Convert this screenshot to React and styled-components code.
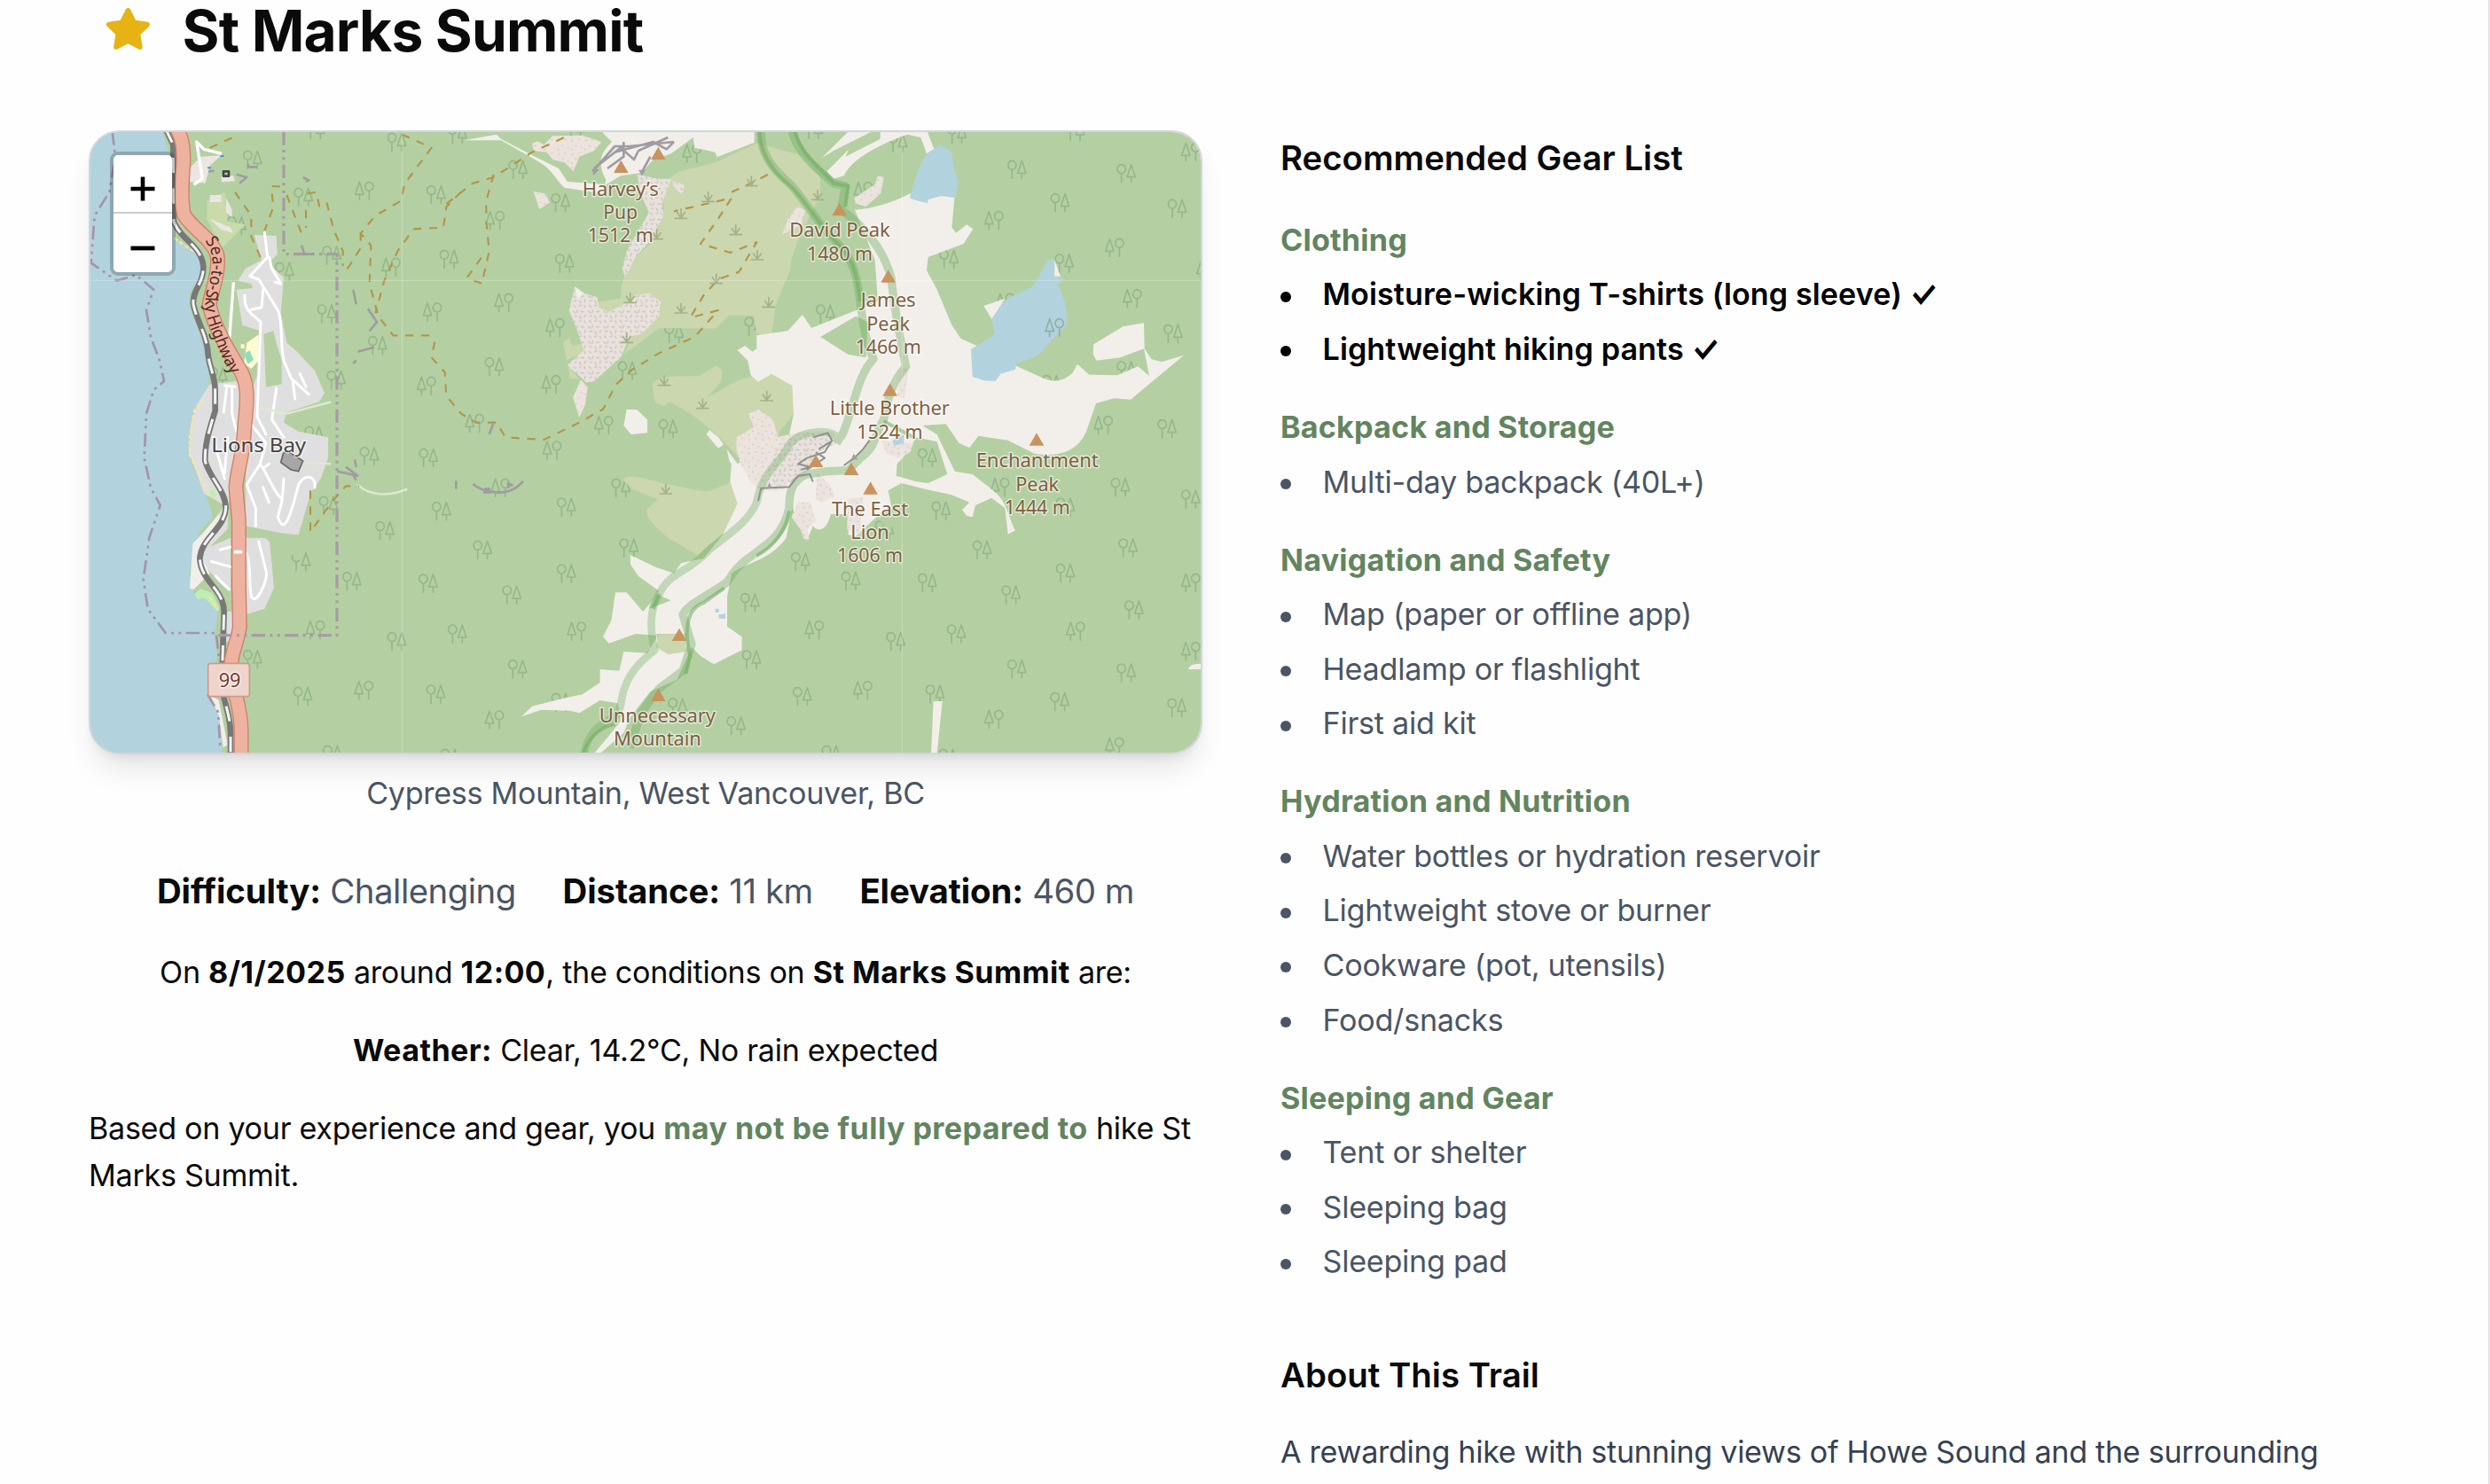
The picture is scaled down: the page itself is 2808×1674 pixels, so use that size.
import React from "react";
import styled, { createGlobalStyle } from "styled-components";
import { FaStar } from "react-icons/fa";

const Global = createGlobalStyle`
  html { font-size: 35.2px; }
  body { margin: 0; background: #fefefe; overflow: hidden; }
  *, *::before { box-sizing: border-box; }
  h1, h2, h3, p, ul { margin: 0; padding: 0; font-weight: inherit; font-size: inherit; }
`;

const Page = styled.main`
  height: 1674px;
  overflow: hidden;
  padding: 0 0 0 100px;
  border-right: 2px solid #e3e3e3;
  font-family: Inter, "Liberation Sans", sans-serif;
  font-size: 0.97rem;
  line-height: 1.5rem;
  letter-spacing: -0.3px;
  color: #0a0a0a;
  strong { letter-spacing: 0.42px; }
`;
const Header = styled.header`
  display: flex;
  align-items: center;
  gap: 0.5rem;
  height: 88px;
  margin: -11.4px 0 2rem;
`;
const StarButton = styled.button`
  display: flex;
  padding: 0.5rem;
  border: 0;
  background: none;
  color: #e6b313;
  font-size: 1.5rem;
`;
const Title = styled.h1`
  padding-top: 5px;
  font-size: 64px;
  line-height: 1;
  font-weight: 700;
  letter-spacing: -0.8px;
`;
const Columns = styled.div`
  display: grid;
  grid-template-columns: 1256px 1256px;
  column-gap: 88px;
`;
const Column = styled.section`
  display: flex;
  flex-direction: column;
  padding-top: ${(p) => (p.$text ? "1px" : "0")};
`;
const MapFrame = styled.div`
  position: relative;
  height: 20rem;
  border: 2px solid #d1d5dc;
  border-radius: 35px;
  overflow: hidden;
  box-shadow: 0 22px 33px -6.6px rgba(0, 0, 0, 0.1), 0 8.8px 13.2px -8.8px rgba(0, 0, 0, 0.1);
  svg { display: block; width: 100%; height: 100%; }
`;
const ZoomControl = styled.div`
  position: absolute;
  left: 22px;
  top: 22px;
  width: 74px;
  border: 4px solid rgba(0, 0, 0, 0.2);
  border-radius: 9px;
  background-clip: padding-box;
`;
const ZoomButton = styled.button`
  display: flex;
  align-items: center;
  justify-content: center;
  width: 100%;
  height: 66px;
  padding: 11px 0 0;
  border: 0;
  border-bottom: ${(p) => (p.$first ? "2px solid #ccc" : "0")};
  border-radius: ${(p) => (p.$first ? "5px 5px 0 0" : "0 0 5px 5px")};
  background: #fff;
  && svg { width: 28px; height: 28px; }
`;
const Caption = styled.p`
  margin-top: 0.5rem;
  padding-top: 0.5px;
  text-align: center;
  color: #4a5565;
`;
const Stats = styled.div`
  display: flex;
  justify-content: center;
  gap: 1.5rem;
  margin-top: 1.5rem;
  font-size: 38.4px;
  line-height: 1.75rem;
  letter-spacing: -0.5px;
  color: #4a5565;
  strong { color: #0a0a0a; letter-spacing: -0.1px; }
`;
const Note = styled.p`
  margin-top: 1rem;
  text-align: ${(p) => (p.$center ? "center" : "left")};
`;
const Warn = styled.strong`
  color: #62855f;
`;
const SectionTitle = styled.h2`
  font-size: 38.4px;
  line-height: 1.75rem;
  font-weight: 600;
  letter-spacing: 0;
  margin-top: ${(p) => (p.$spaced ? "2rem" : "0")};
`;
const Group = styled.div`
  margin-top: 1rem;
`;
const GroupTitle = styled.h3`
  font-weight: 700;
  letter-spacing: 0.2px;
  color: #62855f;
`;
const Items = styled.ul`
  list-style: none;
  display: flex;
  flex-direction: column;
  gap: 0.25rem;
  margin-top: 0.25rem;
`;
const Item = styled.li`
  display: flex;
  align-items: center;
  font-weight: ${(p) => (p.$owned ? 600 : 400)};
  letter-spacing: ${(p) => (p.$owned ? "0.1px" : "-0.25px")};
  color: ${(p) => (p.$owned ? "#000" : "#4a5565")};
  &::before {
    content: "";
    width: 12px;
    height: 12px;
    margin: 4px 35.5px 0 0;
    border-radius: 50%;
    background: currentColor;
  }
`;
const Check = styled.span`
  display: inline-block;
  margin-left: 9px;
  transform: scale(1.04, 1.25);
`;
const Description = styled.p`
  margin-top: 0.75rem;
  line-height: 1.625rem;
  color: #364153;
  white-space: nowrap;
`;

/* Map symbols: [x, y, mirrored]. Units are a third of a pixel. */
const FOREST = [
  [765,-15],[1040,27],[1245,0],[552,87],[930,192,1],[1173,205],[724,213],[498,310],[820,410],[1217,423],[1020,450,1],
  [803,608],[1160,602,1],[975,715],[835,832],[1140,852,1],[947,1090],[1147,1095],[435,820],[760,1020],[660,465],
  [1191,1276],[1000,1342],[809,1257],[716,1447],[888,1513],[1146,1520],[764,1678,1],[1040,1717],[1245,1691],[552,1777],
  [722,1902],[928,1882,1],[1172,1895],[822,2100],[1220,2112],
  [1450,120],[1594,232],[1372,292,1],[1608,437],[1402,570,1],[1575,655,1],[1370,787],[1562,847,1],[1820,800],[1303,978,1],
  [1740,985,1],[1958,997],[1565,1070,1],[2038,65,1],[1978,675],[2248,650],[1645,-20],[2450,-15],
  [1390,1197,1],[1798,1197],[1614,1262],[1330,1407],[1825,1400],[1614,1487],[1429,1559],[1648,1682,1],
  [1449,1810],[1595,1923],[1370,1982,1],[1990,1940],[2188,2002],[2235,1585],[2406,1447],[2240,1778],[2452,1678,1],[2412,1903],
  [2735,30],[2935,0],[3335,-10],[3726,60,1],[3138,120],[3508,133],[3284,232],[3060,292,1],[3680,252],[3468,384,1],
  [2908,423],[3298,437],[3528,556,1],[3666,675],[3508,800],[2490,608],[3430,985,1],[3646,997],[2618,193,1],
  [3098,570,1],[3255,847],[3777,460,1],[2835,1095],
  [3080,1195,1],[3488,1195],[3726,1235],[2881,1275],[3302,1262],[2690,1340],[3020,1407],[3514,1400],[2576,1512],
  [2835,1518],[3302,1485],[3726,1518,1],[3118,1559],[3534,1610],[3336,1682,1],[2933,1691],[2728,1717],[3726,1750,1],
  [3138,1810],[3508,1823],[2616,1882,1],[2861,1895],[3283,1921],[3679,1941],[3060,1980,1],[3468,2073,1],[2510,2100],[2905,2112],
];
const SCRUB = [
  [2250,175],[2104,228],[2012,285],[2197,340],[2270,425],[2131,505],[2309,585],[2012,605],[1930,355],[2474,222],[2085,928],
  [2302,902],[1955,850],[1960,1217],[1840,570],[1828,705],
];
const PEAKS = [[1831,122],[1957,77],[2570,267],[2735,493],[2741,877],[3237,1045],[2490,1118],[2610,1145],[2675,1210],[2028,1706],[1957,1910]];

const Peak = ({ x, y }) => <path d={`M${x} ${y}l25 43h-50z`} fill="#c9935f" />;
const Tree = ({ x, y, flip }) => (
  <path
    transform={flip ? `translate(${x + 65} ${y}) scale(-1 1)` : `translate(${x} ${y})`}
    d="M16 36v30M16 4a14 15 0 1 0 .1 0zM49 4L35 46H63zM49 46v20"
  />
);
const Scrub = ({ x, y }) => <path d={`M${x} ${y + 34}h44M${x + 22} ${y}v32M${x + 22} ${y + 32}l-14-20M${x + 22} ${y + 32}l14-20`} />;

const Label = ({ x, y, lines, widths, size = 66, color = "#80603f", step = 79 }) => (
  <g
    fontFamily='"Noto Sans", sans-serif'
    fontSize={size}
    fill={color}
    stroke="#fff"
    strokeOpacity=".6"
    strokeWidth="9"
    strokeLinejoin="round"
    paintOrder="stroke"
    textAnchor="middle"
  >
    {lines.map((t, i) => (
      <text key={t} x={x} y={y + i * step} textLength={widths[i]} lengthAdjust="spacingAndGlyphs">{t}</text>
    ))}
  </g>
);

const RAIL =
  "M290 15L316 70 318 330C340 390 410 410 418 480C420 540 380 560 384 610C400 680 430 710 434 780C440 830 458 850 458 905V970C440 1030 422 1080 424 1140C440 1200 494 1240 494 1300C490 1370 410 1400 406 1470C410 1550 486 1570 488 1650L482 1840C472 1950 508 1970 510 2060V2140";
const HIGHWAY =
  "M325 10C350 50 352 90 350 140C345 200 342 260 352 305C375 350 440 380 464 440C475 490 448 560 438 610C455 690 500 760 535 820C580 880 562 960 556 1040C555 1110 530 1180 528 1230L538 1340V1560L541 1700C535 1750 515 1780 512 1830C510 1900 545 1960 546 2050V2140";

function TrailMap() {
  return (
    <svg viewBox="36 27 3756 2100" preserveAspectRatio="none" fill="none" strokeLinejoin="round">
      <defs>
        <pattern id="dots" width="46" height="46" patternUnits="userSpaceOnUse">
          <rect width="46" height="46" fill="#ebe3dc" />
          <path d="M8 10h5M30 6h5M20 27h5M40 34h4M6 40h5" stroke="#c9c3bf" strokeWidth="4" />
        </pattern>
        <pattern id="scree" width="52" height="52" patternUnits="userSpaceOnUse">
          <rect width="52" height="52" fill="#e9e1db" />
          <path d="M4 8l9 8M20 4l-3 11M30 10l12 1M47 20l-4 11M8 27l10-3M26 24l6 11M6 40l8 8M24 44l10-4M42 40l5 9" stroke="#c5c3c2" strokeWidth="4" />
        </pattern>
      </defs>
      <rect x="0" y="0" width="3830" height="2160" fill="#b4d0a2" />

      <g stroke="#96b78b" strokeWidth="5">
        {FOREST.map(([x, y, f]) => <Tree key={`${x},${y}`} x={x} y={y} flip={f} />)}
      </g>

      {/* scrub */}
      <g fill="#cbd7af">
        <path d="M2290 65L2160 125C2080 155 2010 150 1995 190L1975 260L1975 310L1935 400L1860 470L1832 545L1830 590L1755 600L1750 640L1860 740L1840 780L1960 690L2150 692L2195 648L2280 648L2290 712L2340 715L2355 610L2405 490L2407 460L2435 380L2505 240L2505 180L2440 105Z" />
        <path d="M1635 740L1655 722L1665 750L1705 742V775L1645 800L1690 865L1660 862Z" />
        <path d="M1937 880C1960 840 2060 860 2100 850L2150 820C2180 820 2180 860 2155 890L2120 925C2180 900 2200 870 2270 855L2342 845L2410 885L2418 975L2370 1040L2300 1180L2230 1130C2160 1050 2080 980 1995 940L1975 955L1945 940Z" />
        <path d="M1838 1205C1850 1180 1900 1195 1990 1220C2060 1230 2110 1250 2140 1238L2210 1208L2235 1285L2180 1380L2090 1458L1990 1400C1940 1360 1915 1330 1918 1305L1955 1270L1870 1235Z" />
      </g>

      {/* open ground */}
      <g fill="#f2efea">
        <path d="M1760 20L1800 60C1760 100 1750 130 1780 190L1770 235L1640 215C1610 190 1600 150 1540 120L1425 55L1300 55L1410 35L1425 50L1540 110L1620 150L1650 195L1780 205L1830 175L1900 165L1940 120L2000 100L2075 45L2080 80L2150 95L2155 112L2282 62V20Z" />
        <path d="M2605 20L2510 115L2550 90L2690 20ZM2708 20V50L2590 110L2602 85L2528 160L2550 185L2585 175C2610 120 2700 70 2800 35L2845 45L2865 100L2890 85L2865 20Z" />
        <path d="M2622 290C2680 285 2740 270 2810 235L2960 240L2950 350L2965 368L3000 340L3022 355L2990 405L2870 450L2865 495L2900 560L2950 680L2980 725L3030 748L3150 810L3260 860C3310 880 3340 860 3360 840L3375 812L3415 848L3510 850L3580 820L3618 852L3600 760L3520 790L3440 800L3428 780L3430 745L3530 685L3600 673L3602 760L3625 795L3660 805L3735 782L3555 932L3500 928L3438 945L3405 1040C3380 1100 3320 1130 3230 1115L3140 1070L3040 1055L3010 1095L2975 1080L2930 1015L2850 1020L2900 1050L2960 1175L3020 1185L3090 1240C3140 1280 3140 1330 3165 1375L3140 1388L3130 1300L3085 1265L3030 1290L3020 1330L3000 1325L2985 1305L3010 1280L2950 1255L2860 1235L2780 1215L2735 1240L2750 1320L2730 1350L2700 1325L2625 1395L2600 1390V1320L2540 1320C2530 1370 2500 1385 2480 1360L2460 1410L2410 1300L2390 1400C2330 1480 2260 1480 2205 1520L2190 1600V1700L2240 1735V1780L2145 1828L2100 1800L2070 1770L2020 1880L1930 1920L1860 2010L1840 2060L1760 2130H1740L1790 2070L1830 2020L1820 1960L1760 1950L1690 1993L1660 1985L1560 1982L1495 2005L1530 1970L1630 1945L1700 1930L1760 1890V1845L1825 1850L1840 1785L1920 1790L1950 1740V1730L1880 1725L1790 1757L1770 1735L1798 1680L1812 1585H1850L1905 1650L1940 1610L1960 1580L1890 1530L1863 1490L1862 1458L1950 1500L2010 1520L2035 1485L2110 1470L2175 1390L2225 1285L2200 1210L2205 1150L2120 1050L2130 1035L2160 1060L2225 1150L2400 1050L2415 980L2410 885L2340 845L2295 872L2270 850L2260 800L2225 765L2250 750L2275 770L2290 760V715L2395 700L2445 645L2475 690L2640 625L2700 600L2690 460Z" />
        <path d="M1850 965L1885 967L1920 1000V1045L1865 1050L1840 1020ZM2888 1953H2918L2900 2130H2880ZM3750 1845C3760 1820 3790 1830 3800 1825V1845Z" />
      </g>
      <g fill="#b4d0a2">
        <path d="M2505 720L2625 650L2665 670L2660 790L2600 780Z" />
        <path d="M2765 1150L2800 1110L2830 1060L2900 1075L2935 1185L2870 1215L2830 1210L2762 1190Z" />
        <path d="M2700 1330L2820 1250L2840 1330L2730 1370ZM2155 1100L2200 1152L2185 1080ZM1925 1640L2000 1612L1950 1590Z" />
        <path d="M1950 1725H2050V1740L1960 1770Z" />
      </g>
      <g stroke="#96b78b" strokeWidth="5"><Tree x={2835} y={1095} /></g>
      <path d="M1960 1727L2050 1725V1785L1990 1795L1950 1770Z" fill="#cbd7af" />

      {/* bare rock and scree */}
      <g fill="url(#dots)">
        <path d="M1530 65L1550 58L1570 70L1600 40L1700 38L1765 60L1740 90L1690 110L1670 160L1640 130L1600 120L1580 95L1535 90ZM1535 228L1575 235L1590 265L1555 288ZM2425 280L2455 290L2440 340L2375 375L2395 325ZM1695 865L1718 890L1710 950L1690 992L1668 925ZM2620 250L2690 205L2700 175L2720 180L2710 235L2660 278L2625 270Z" />
        <path d="M2262 980L2295 965L2345 1000L2362 1060L2440 1040L2440 1150L2380 1240H2300L2270 1210L2235 1150L2222 1100V1060L2280 1025ZM2430 1280L2470 1278L2492 1340L2462 1370L2468 1405L2450 1405L2440 1375L2408 1330ZM2495 1180L2540 1225L2555 1260L2510 1280L2490 1270ZM2600 1270L2650 1260L2640 1390L2595 1370ZM2780 830L2805 820L2790 930L2765 920ZM2710 1070L2820 1080L2810 1110L2770 1130L2730 1115Z" />
      </g>
      <g fill="url(#scree)">
        <path d="M1675 550L1705 572L1750 585L1757 620L1790 635L1850 605L1880 580L1925 572L1965 600L1960 650L1900 710L1860 720L1830 790L1740 870L1715 875L1650 815L1705 765L1680 690L1655 630Z" />
        <path d="M1885 170L1960 185L2000 185L1970 270L1975 310L1935 390L1880 450L1845 520L1835 490L1850 430L1890 360L1925 300L1900 240ZM2000 190L2045 205L2040 240L2015 220Z" />
        <path d="M2370 1080L2450 1040L2550 1040L2560 1080L2500 1110L2450 1190L2360 1230L2320 1170Z" />
      </g>
      <path d="M1675 550L1705 572L1683 592Z" fill="#f2efea" />

      {/* water */}
      <g fill="#b2d2de">
        <path d="M0 0H270L290 60 318 150 318 385L400 440L412 510L372 570L370 620L395 680L425 770L438 850L432 920L385 965L370 1060L372 1130L410 1220L440 1290L450 1330L405 1380L385 1440L372 1520L385 1590L440 1600L470 1640L455 1720L465 1800L430 1930L470 1990L485 2160H0Z" />
        <path d="M2808 245L2838 150L2862 105L2910 68L2950 95L2957 150L2973 195L2962 250L2915 243L2870 255L2868 268L2845 262L2810 252Z" />
        <path d="M3275 460L3298 457L3297 515L3328 520L3308 545C3330 580 3345 630 3338 680L3270 750C3240 800 3190 800 3168 810L3165 830L3115 845L3098 870L3060 868L3020 855L3015 762L3095 712L3085 660L3105 620C3140 580 3180 575 3225 548Z" />
        <path d="M2750 1070L2765 1060L2772 1052L2788 1052V1080L2755 1088ZM2150 1640h12v12h-12zM2162 1660l22-3v16h-22z" />
      </g>
      <path d="M3298 460L3318 515L3297 515ZM3058 615L3130 590L3085 660Z" fill="#f2efea" />
      <g stroke="#90afa3" strokeWidth="5"><Tree x={3265} y={655} flip /></g>

      {/* Lions Bay */}
      <g fill="#e0dfdf">
        <path d="M590 375L665 378L668 440L640 470L690 520L680 640L700 740L735 770L795 835L828 910L810 940L700 975L690 1010L740 1040L840 1060V1130L815 1200L780 1250L740 1390L690 1385L560 1360L565 950L600 850L610 700L550 680L530 560L585 555L580 540L535 530L560 490L615 460Z" />
        <path d="M440 880L530 870L570 940L545 1130L505 1260L500 1370L440 1430L380 1570L385 1430L440 1360L490 1290L420 1250L370 1110L375 1020L395 950Z" />
        <path d="M560 1400C590 1390 640 1395 643 1420L657 1570L625 1640L565 1658ZM440 1430L510 1400V1580L480 1560L410 1480ZM490 1650H520V1750H490Z" />
      </g>
      <path d="M622 710L655 700L665 740L683 800V880L630 890ZM560 1362L700 1390L750 1400V1480L640 1400L560 1400Z" fill="#b4d0a2" />
      <path d="M382 1420L420 1380L470 1320L480 1340L400 1440L440 1520L385 1575L372 1570ZM440 1930L470 1950L500 2100L485 2110L470 2000Z" fill="#f2efea" />
      <path d="M565 740L605 712V800L580 828L555 810ZM545 745h12v14h-12z" fill="#fcfcd0" />
      <path d="M555 778L575 766L588 798L568 812Z" fill="#94dcc0" />
      <path d="M435 1240l20-3 10 20-20 10zM388 1590l20-18 40 15 25 50-15 5-35-38-25 3z" fill="#bfeeb0" />
      <path d="M318 385L405 445M420 930L388 968L372 1060L372 1120L430 1240M440 1600L468 1645" stroke="#f3e6a8" strokeWidth="7" strokeDasharray="16 6" />
      <path d="M430 260L490 230L500 330L560 340L480 420L430 320Z" fill="#c9dbaa" />
      <path d="M370 150L410 110L480 105L440 140L425 200L370 195ZM440 240l38 0v24h-38zM480 175l40 0 5 18-45 3zM495 250L515 290 515 315 495 300ZM440 320l70 30 8 18-40-10z" fill="#ece6e2" />
      <path d="M385 205L415 185L395 60L420 85L480 100M520 535L505 740" stroke="#fff" strokeWidth="10" />
      <g stroke="#fff" strokeWidth="9" strokeLinecap="round">
        <path d="M625 367L635 450L575 515L605 525L670 630C690 680 675 730 690 800L715 860L775 915M640 450L650 490L680 540L660 535M558 580C555 630 580 640 612 670L600 990L630 1050M620 560L615 620L580 628M665 895L650 1000L690 1060M720 865L728 930M745 845L765 890M490 885L525 888M497 890L487 975M515 890V980L530 1040M450 1060L490 1200M500 1060L490 1180M575 1010L630 1080L610 1150L565 1220L595 1300V1360M610 1150C640 1190 650 1240 685 1270L690 1200M620 1230L640 1280M685 1270L670 1330C690 1390 710 1340 740 1220C760 1180 800 1190 795 1230M620 1165L640 1150M475 1440L515 1430M445 1480L510 1498M540 1448L565 1455C580 1490 570 1530 580 1600C600 1630 630 1550 632 1520L605 1412M460 1530L505 1575" />
      </g>
      <path d="M610 960L700 980L850 940M750 1145L850 1150M940 1220C980 1260 1050 1260 1108 1235" stroke="#dcebd0" strokeWidth="7" />

      {/* railway and highway */}
      <path d={RAIL} stroke="#787878" strokeWidth="20" />
      <path d={RAIL} stroke="#f4f4f4" strokeWidth="9" strokeDasharray="52 52" />
      <path d={HIGHWAY} stroke="#cf7f68" strokeWidth="51" />
      <path d={HIGHWAY} stroke="#eeb2a0" strokeWidth="43" />
      <path d="M525 1448h20" stroke="#fff" strokeWidth="11" strokeLinecap="round" />
      <path d="M688 1115L700 1105L755 1140L740 1175L715 1170L680 1145Z" fill="#a9a7a5" stroke="#696969" strokeWidth="5" />
      <path d="M486 160h18v16h-18z" stroke="#444" strokeWidth="8" />

      {/* municipal boundary */}
      <g stroke="#a393ae" strokeWidth="8" strokeDasharray="46 16 9 16 9 16">
        <path d="M110 25L120 110L100 230L50 310L38 470L125 530L190 510L250 560L225 630L240 720L270 800L285 870L250 900L225 980L218 1130L240 1230L272 1290L235 1400L215 1540L230 1640L290 1722H455" />
        <path d="M690 25V440H870V1730H455" strokeWidth="10" stroke="#a79ca6" />
        <path d="M462 1730L470 1800M432 1930L468 1990L475 2110" />
      </g>

      {/* footpaths */}
      <g stroke="#b4954a" strokeWidth="6.5" strokeDasharray="28 26">
        <path d="M1090 35L1190 80L1100 200L1085 260L1000 310L950 370L985 410L980 540L1010 650L1060 715H1180L1200 740L1190 790L1235 840L1240 920L1290 980L1340 1010L1410 1010L1440 1060L1570 1068L1680 1015L1770 965L1815 880L1870 830L1960 775L2080 720L2160 630L2065 655L2110 580L2160 525L2230 500L2290 400L2200 435L2100 405L2160 320L2205 250L2010 295" />
        <path d="M1290 230L1240 280L1230 350L1130 355L1075 430L1030 530L1000 640M1240 270L1330 200L1400 180L1530 95L1650 40M1400 170L1375 260L1375 330L1385 430L1360 540L1310 520L1360 450M2205 230L2270 200L2330 170M650 235L655 280L625 360M700 240L750 370M765 290V350M835 265L860 360L890 430V480M525 230L580 310L580 380L615 460M650 210L685 212M770 235L800 230L815 300M905 490L950 420V370M780 1240V1380L830 1310L860 1270L900 1225L945 1225M440 80L530 40" />
      </g>

      {/* park boundary glow */}
      <g stroke="#6dab60" strokeLinejoin="round">
        <path strokeOpacity=".4" strokeWidth="28" d="M2305 25C2300 90 2340 150 2400 200C2450 250 2490 330 2560 400C2620 460 2630 520 2640 600C2650 680 2660 740 2685 795C2630 850 2620 960 2580 1050L2560 1080M2410 25C2430 110 2520 170 2550 200L2590 210L2575 290C2660 350 2720 430 2745 520C2755 620 2770 700 2795 820C2740 880 2730 950 2720 1000C2690 1040 2700 1090 2640 1130L2600 1172L2530 1175L2460 1185C2400 1210 2400 1260 2400 1300C2380 1390 2330 1420 2260 1470C2220 1500 2210 1520 2190 1550C2120 1600 2060 1620 2040 1660L2070 1760L2040 1850L1960 1910L1900 1990L1860 2110" />
        <path strokeOpacity=".36" strokeWidth="26" d="M2560 1055C2520 1030 2430 1040 2400 1085C2370 1150 2310 1170 2290 1280C2260 1350 2190 1390 2130 1440C2060 1520 2000 1510 1960 1590C1925 1640 1930 1720 1945 1780C1880 1830 1840 1880 1830 1965L1820 2000C1760 2030 1710 2060 1705 2150" />
        <path strokeOpacity=".55" strokeWidth="12" d="M2300 25C2300 90 2340 160 2400 205C2450 250 2490 330 2570 410C2620 460 2630 520 2640 600M2420 25C2440 110 2520 160 2550 200L2600 210L2590 280M2400 1310C2390 1370 2350 1430 2290 1460M2180 1570L2110 1620C2050 1640 2045 1720 2065 1800L2050 1860M1940 1640L1960 1590M1700 2150C1710 2080 1760 2040 1810 2030M2720 1005L2820 1060" />
      </g>

      {/* cliffs */}
      <g stroke="#a09ca2" strokeWidth="8">
        <path d="M1735 160L1810 75H1860L2010 60M1740 150L1830 80L1875 120L1890 90L1990 45M1810 95L1940 60L1985 85L2010 60M1785 150L1840 110L1840 60M1900 165L1930 110M1330 1218C1360 1245 1450 1270 1500 1208M1273 1207v28M870 1175L940 1190L900 1160M930 1135L935 1160M920 1180L935 1205M925 560L935 610M975 625L1005 670L980 700M940 770L995 755M925 810L935 800M750 410L760 440L790 440M530 170L565 180L540 200M755 180L775 190L765 195M570 135V145H600M435 160L455 158M1385 1050L1400 1010" />
        <path d="M2295 1275L2305 1232L2400 1228L2430 1190L2470 1185L2480 1210M2480 1060L2530 1045L2545 1070L2520 1110L2460 1130L2430 1150L2470 1160L2440 1170M2490 1110L2520 1130L2460 1170M2500 1100L2540 1075M2585 1155L2620 1130L2650 1100L2672 1070" stroke="#8f918f" strokeWidth="6" />
        <path d="M1735 150l22 4-20 20zM1890 155l24 0-12 20zM1370 1230l18 0 2 20h-25zM1445 1210l25 12-25 12zM2325 1232l8-20 8 20zM2610 1135l8-20 14 20z" fill="#a09ca2" stroke="none" />
      </g>
      <path d="M475 108h12M432 148h12" stroke="#4b8fe0" strokeWidth="6" />

      <g stroke="#a4b287" strokeWidth="5">
        {SCRUB.map(([x, y]) => <Scrub key={`${x},${y}`} x={x} y={y} />)}
      </g>
      <path d="M1090 27V2130M2782 27V2130M36 529H3800" stroke="#fff" strokeOpacity=".28" strokeWidth="3" />

      {PEAKS.map(([x, y]) => <Peak key={`${x},${y}`} x={x} y={y} />)}
      <Label x={1829} y={242} lines={["Harvey’s", "Pup", "1512 m"]} widths={[258, 116, 222]} />
      <Label x={2571} y={382} lines={["David Peak", "1480 m"]} widths={[340, 222]} />
      <Label x={2735} y={619} lines={["James", "Peak", "1466 m"]} widths={[186, 146, 222]} />
      <Label x={2740} y={985} lines={["Little Brother", "1524 m"]} widths={[405, 222]} />
      <Label x={3239} y={1162} lines={["Enchantment", "Peak", "1444 m"]} widths={[414, 146, 222]} />
      <Label x={2673} y={1325} lines={["The East", "Lion", "1606 m"]} widths={[258, 130, 222]} />
      <Label x={1954} y={2025} lines={["Unnecessary", "Mountain"]} widths={[394, 296]} />
      <Label x={605} y={1109} lines={["Lions Bay"]} widths={[320]} color="#444" />
      <path id="road" d="M423 395C462 440 448 500 432 560C410 620 440 690 462 740C480 790 500 830 525 870" />
      <text fontFamily='"Noto Sans", sans-serif' fontSize="57" fill="#4d2a20">
        <textPath href="#road" textLength="478" lengthAdjust="spacingAndGlyphs">Sea-to-Sky Highway</textPath>
      </text>
      <rect x="434" y="1825" width="140" height="112" rx="9" fill="#eed5cc" stroke="#d3998a" strokeWidth="5" />
      <Label x={507} y={1905} lines={["99"]} widths={[74]} size={64} color="#7a3c2c" />
    </svg>
  );
}

const GEAR = [
  { title: "Clothing", owned: true, items: ["Moisture-wicking T-shirts (long sleeve)", "Lightweight hiking pants"] },
  { title: "Backpack and Storage", items: ["Multi-day backpack (40L+)"] },
  { title: "Navigation and Safety", items: ["Map (paper or offline app)", "Headlamp or flashlight", "First aid kit"] },
  {
    title: "Hydration and Nutrition",
    items: ["Water bottles or hydration reservoir", "Lightweight stove or burner", "Cookware (pot, utensils)", "Food/snacks"],
  },
  { title: "Sleeping and Gear", items: ["Tent or shelter", "Sleeping bag", "Sleeping pad"] },
];

export default function App() {
  return (
    <Page>
      <Global />
      <Header>
        <StarButton aria-label="Favourite"><FaStar /></StarButton>
        <Title>St Marks Summit</Title>
      </Header>
      <Columns>
        <Column>
          <MapFrame>
            <TrailMap />
            <ZoomControl>
              <ZoomButton $first aria-label="Zoom in">
                <svg viewBox="0 0 28 28"><path d="M0.5 14H27.5M14 0.5V27.5" stroke="#000" strokeWidth="4.6" /></svg>
              </ZoomButton>
              <ZoomButton aria-label="Zoom out">
                <svg viewBox="0 0 28 28"><path d="M0.5 14H27.5" stroke="#000" strokeWidth="4.8" /></svg>
              </ZoomButton>
            </ZoomControl>
          </MapFrame>
          <Caption>Cypress Mountain, West Vancouver, BC</Caption>
          <Stats>
            <span><strong>Difficulty:</strong> Challenging</span>
            <span><strong>Distance:</strong> 11 km</span>
            <span><strong>Elevation:</strong> 460 m</span>
          </Stats>
          <Note $center>
            On <strong>8/1/2025</strong> around <strong>12:00</strong>, the conditions on <strong>St Marks Summit</strong> are:
          </Note>
          <Note $center><strong>Weather:</strong> Clear, 14.2°C, No rain expected</Note>
          <Note>
            Based on your experience and gear, you <Warn>may not be fully prepared to</Warn> hike St Marks Summit.
          </Note>
        </Column>
        <Column $text>
          <SectionTitle>Recommended Gear List</SectionTitle>
          {GEAR.map((g) => (
            <Group key={g.title}>
              <GroupTitle>{g.title}</GroupTitle>
              <Items>
                {g.items.map((t) => (
                  <Item key={t} $owned={g.owned}>
                    {t}
                    {g.owned && <Check>✓</Check>}
                  </Item>
                ))}
              </Items>
            </Group>
          ))}
          <SectionTitle $spaced>About This Trail</SectionTitle>
          <Description>A rewarding hike with stunning views of Howe Sound and the surrounding</Description>
        </Column>
      </Columns>
    </Page>
  );
}
